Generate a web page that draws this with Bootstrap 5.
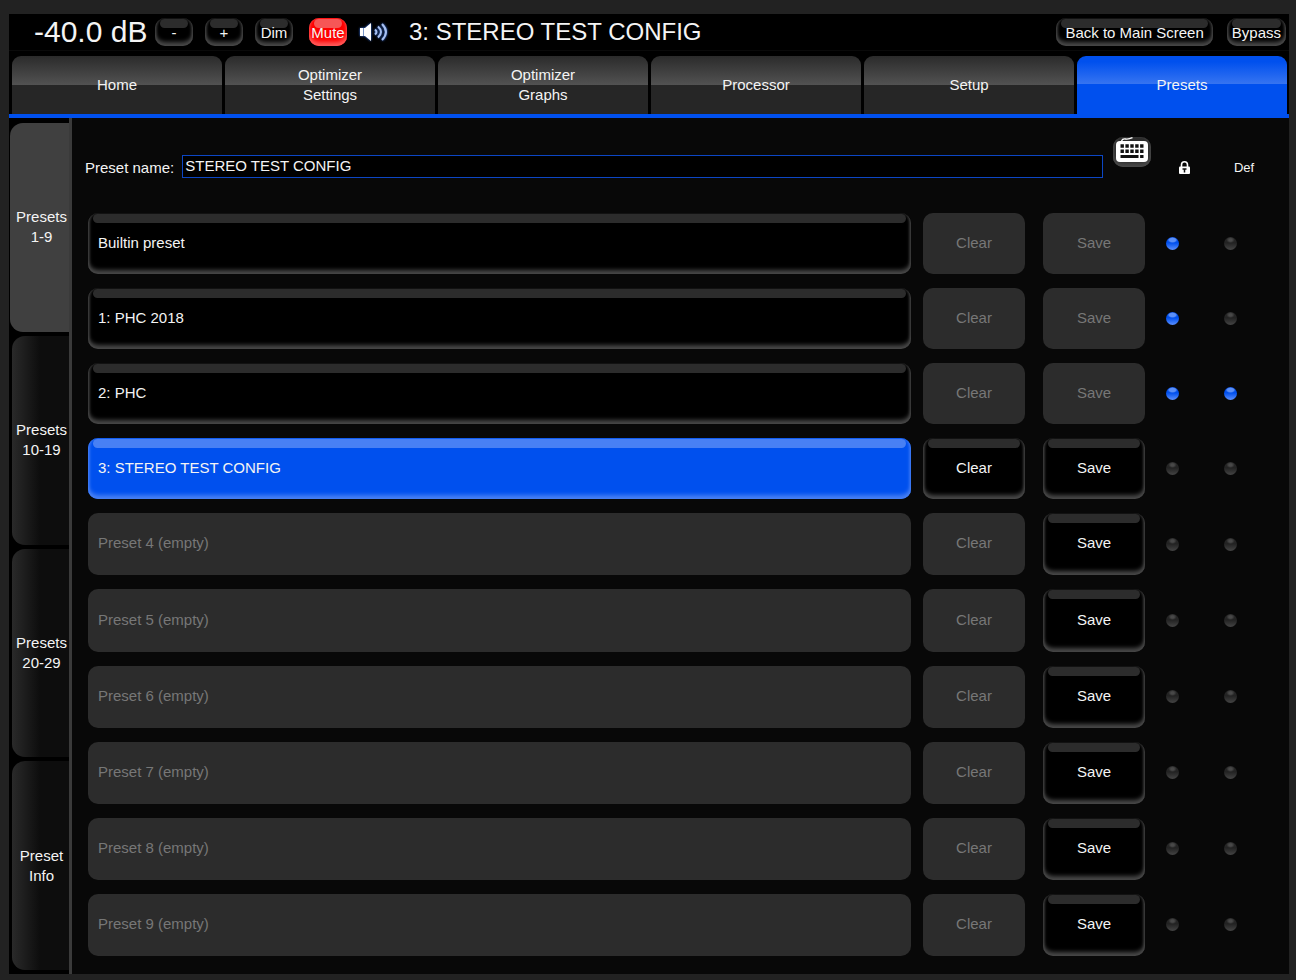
<!DOCTYPE html>
<html lang="en">
<head>
<meta charset="utf-8">
<meta name="viewport" content="width=device-width, initial-scale=1">
<title>Presets</title>
<link href="https://cdn.jsdelivr.net/npm/bootstrap@5.3.0/dist/css/bootstrap.min.css" rel="stylesheet">
<style>
  :root { --accent: #0050ee; }
  body {
    background: #222;
    color: #f4f4f4;
    font: 15px/20px "Liberation Sans", Arial, sans-serif;
    padding: 14px 7px 6px 9px;
  }
  .console { background: #000; }

  /* Raised dark key with a gloss strip on top and a lit lower rim */
  .key {
    position: relative;
    z-index: 0;
    border: 0;
    padding: 0 0 2px;
    border-radius: 10px;
    background: #000;
    color: #f4f4f4;
    box-shadow: inset 0 -4px 4px #484848, inset 2px 0 3px -1px #484848, inset -2px 0 3px -1px #484848;
  }
  .key::before {
    content: "";
    position: absolute;
    z-index: -1;
    top: 1px; left: 5px; right: 5px;
    height: 9px;
    border-radius: 5px;
    background: #2c2c2c;
  }
  .key:disabled { background: #2c2c2c; color: #777; box-shadow: none; }
  .key:disabled::before { display: none; }
  .key.selected {
    background: var(--accent);
    box-shadow: inset 0 -4px 4px #4880f4, inset 2px 0 3px -1px #4880f4, inset -2px 0 3px -1px #4880f4;
  }
  .key.selected::before { background: #4880f4; }

  .top-bar { min-height: 37px; border-bottom: 1px solid #0a0a0a; }
  .level { font-size: 30px; line-height: 36px; padding-left: 25px; width: 146px; }
  .config-title { font-size: 24px; line-height: 32px; }
  .volume-keys { gap: 12px; }
  .screen-keys { gap: 14px; padding-right: 3px; }
  .key-mini { height: 28px; min-width: 38px; padding: 1px 0 0; white-space: nowrap; }
  .screen-keys .key-mini { padding: 1px 5px 0; }
  .screen-keys .key-wide { padding: 1px 9px 0; }
  .key-mini.muted { background: #f00; box-shadow: inset 0 -4px 4px #ff5a5a, inset 0 0 2px #ff5a5a; }
  .key-mini.muted::before { background: #f65656; }

  .tab-row { padding: 5px 2px 0 3px; gap: 3px; border-bottom: 4px solid var(--accent); }
  .tab-link {
    flex: 1 1 0;
    height: 58px;
    border-radius: 9px 9px 0 0;
    background: linear-gradient(#2b2b2b 0, #525252 50%, #262626 50%);
    color: #f4f4f4;
    text-decoration: none;
  }
  .tab-link.active { background: linear-gradient(#0050ee 10%, #3674f1 48%, #0050ee 48%); }

  .side-tabs { width: 63px; padding: 5px 0 4px 3px; gap: 4px; border-right: 3px solid #3a3a3a; }
  .side-link {
    flex: 1 1 0;
    padding-left: 2px;
    border-radius: 13px 0 0 13px;
    background: linear-gradient(90deg, #2a2a2a 0, #0d0d0d 28px);
    color: #f4f4f4;
    text-decoration: none;
  }
  .side-link.active { background: #404040; margin-left: -2px; padding-left: 4px; }

  .panel { background: #080808; padding: 19px 0 18px; }
  .name-row { min-height: 41px; padding: 0 18px 0 13px; margin-bottom: 35px; }
  .name-input {
    height: 23px;
    border: 1px solid #0c46c4;
    padding: 0 2px 2px;
    background: #000;
    color: #f4f4f4;
  }
  .icon-key { width: 38px; height: 30px; margin-left: 10px; background: #2c2c2c; }
  .icon-key::before { display: none; }
  .lock-head { width: 66px; }
  .def-head { width: 54px; font-size: 13px; }

  .preset-list { gap: 14px; padding: 0 28px 0 16px; }
  .preset-row { flex: 61 1 0; min-height: 40px; }
  .preset-row.unused { flex-grow: 62; }
  .preset-name { padding-left: 10px; margin-right: 12px; text-align: left; }
  .action { width: 102px; }
  .action + .action { margin-left: 18px; }
  .led-cell { width: 54px; }
  .led-cell-wide { width: 62px; }
  .led {
    appearance: none;
    width: 13px;
    height: 13px;
    margin: 0;
    border-radius: 50%;
    background: radial-gradient(ellipse 4px 3px at 50% 3px, #484848 40%, transparent), linear-gradient(#2a2a2a 0, #222 45%, #444 100%);
  }
  .led:checked {
    background: radial-gradient(ellipse 5px 3px at 50% 3px, #5c90f8 60%, transparent), linear-gradient(#0048e0 0, #0050ee 45%, #5c90ff 100%);
  }
</style>
</head>
<body class="min-vh-100 d-flex flex-column">
<div class="console flex-grow-1 d-flex flex-column">

  <header class="top-bar d-flex align-items-center">
    <div class="level text-nowrap">-40.0 dB</div>
    <div class="volume-keys d-flex">
      <button type="button" class="key key-mini" aria-label="Volume down">-</button>
      <button type="button" class="key key-mini" aria-label="Volume up">+</button>
      <button type="button" class="key key-mini">Dim</button>
    </div>
    <button type="button" class="key key-mini muted ms-3">Mute</button>
    <svg class="ms-2" width="38" height="24" viewBox="0 0 38 24" aria-hidden="true">
      <g style="filter:drop-shadow(0 0 1px #3674f1)">
        <path d="M5 8h5l6-5v18l-6-5H5z" fill="#fff"/>
        <path d="M8.500 8v8" stroke="#7795c8" stroke-width="1"/>
        <g fill="none" stroke="#a8c0f0" stroke-width="2">
          <path d="M20 9.500q3 2.500 0 5"/><path d="M23 6.500q6 5.500 0 11"/><path d="M27 4q8 8 0 16"/>
        </g>
      </g>
    </svg>
    <div class="config-title ms-3 text-nowrap">3: STEREO TEST CONFIG</div>
    <div class="screen-keys d-flex ms-auto">
      <button type="button" class="key key-mini key-wide">Back to Main Screen</button>
      <button type="button" class="key key-mini">Bypass</button>
    </div>
  </header>

  <nav class="tab-row d-flex text-center" aria-label="Main">
    <a href="#" class="tab-link d-flex align-items-center justify-content-center">Home</a>
    <a href="#" class="tab-link d-flex align-items-center justify-content-center"><span>Optimizer<br>Settings</span></a>
    <a href="#" class="tab-link d-flex align-items-center justify-content-center"><span>Optimizer<br>Graphs</span></a>
    <a href="#" class="tab-link d-flex align-items-center justify-content-center">Processor</a>
    <a href="#" class="tab-link d-flex align-items-center justify-content-center">Setup</a>
    <a href="#" class="tab-link active d-flex align-items-center justify-content-center" aria-current="page">Presets</a>
  </nav>

  <div class="flex-grow-1 d-flex">
    <nav class="side-tabs d-flex flex-column flex-shrink-0 text-center" aria-label="Preset pages">
      <a href="#" class="side-link active d-flex align-items-center justify-content-center" aria-current="page"><span>Presets<br>1-9</span></a>
      <a href="#" class="side-link d-flex align-items-center justify-content-center"><span>Presets<br>10-19</span></a>
      <a href="#" class="side-link d-flex align-items-center justify-content-center"><span>Presets<br>20-29</span></a>
      <a href="#" class="side-link d-flex align-items-center justify-content-center"><span>Preset<br>Info</span></a>
    </nav>

    <main class="panel flex-grow-1 d-flex flex-column">
      <div class="name-row d-flex align-items-end">
        <label for="presetName" class="text-nowrap me-2">Preset name:</label>
        <input id="presetName" class="name-input flex-grow-1" type="text" value="STEREO TEST CONFIG">
        <button type="button" class="key icon-key align-self-start d-flex justify-content-center" aria-label="Show keyboard">
          <svg width="32" height="26" viewBox="0 0 32 26" aria-hidden="true">
            <path d="M5.500 4q1-2.500 4-2t7-1.300" fill="none" stroke="#fff" stroke-width="1.300"/>
            <rect y="4" width="32" height="21" rx="4" fill="#fff"/>
            <g stroke="#111" stroke-width="3.500">
              <path d="M4.500 9h23M4.500 14.200h23" stroke-dasharray="3.400 1.500"/>
              <path d="M4.500 19.500h18M24.100 19.500h3.400" stroke-width="3"/>
            </g>
          </svg>
        </button>
        <div class="lock-head d-flex justify-content-center pb-1">
          <svg width="11" height="13" viewBox="0 0 11 13" role="img" aria-label="Locked">
            <path d="M2.500 6V3.800a3 3 0 0 1 6 0V6" fill="none" stroke="#fff" stroke-width="1.600"/>
            <rect y="5.500" width="11" height="7.500" rx="1" fill="#fff"/>
            <path d="M3.500 8h4M5.500 7.500v4" stroke="#111" stroke-width="1.500"/>
          </svg>
        </div>
        <div class="def-head text-center">Def</div>
      </div>

      <div class="preset-list flex-grow-1 d-flex flex-column" id="presetList"></div>
    </main>
  </div>
</div>

<script>
  const presets = [
    { name: "Builtin preset", locked: true, save: false },
    { name: "1: PHC 2018", locked: true, save: false },
    { name: "2: PHC", locked: true, save: false, def: true },
    { name: "3: STEREO TEST CONFIG", selected: true, clear: true, save: true }
  ];
  for (let n = 4; n < 10; n++) presets.push({ name: `Preset ${n} (empty)`, empty: true, save: true });

  document.getElementById("presetList").innerHTML = presets.map(p => `
    <div class="preset-row d-flex ${p.empty ? "unused" : ""}">
      <button type="button" class="key preset-name flex-grow-1 ${p.selected ? "selected" : ""}" ${p.empty ? "disabled" : ""}>${p.name}</button>
      <button type="button" class="key action" ${p.clear ? "" : "disabled"}>Clear</button>
      <button type="button" class="key action" ${p.save ? "" : "disabled"}>Save</button>
      <div class="led-cell d-flex align-items-center justify-content-center">
        <input class="led" type="checkbox" aria-label="Lock ${p.name}" ${p.locked ? "checked" : ""}>
      </div>
      <div class="led-cell-wide d-flex align-items-center justify-content-center">
        <input class="led" type="radio" name="defaultPreset" aria-label="Default ${p.name}" ${p.def ? "checked" : ""}>
      </div>
    </div>`).join("");
</script>
<script src="https://cdn.jsdelivr.net/npm/bootstrap@5.3.0/dist/js/bootstrap.bundle.min.js"></script>
</body>
</html>
